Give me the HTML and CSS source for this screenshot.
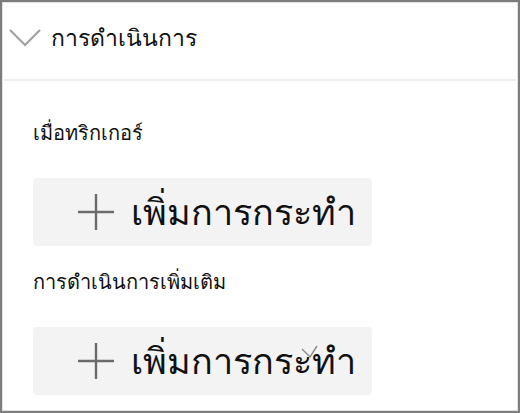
FILE: index.html
```html
<!DOCTYPE html>
<html lang="th">
<head>
    <meta charset="UTF-8">
    <meta name="viewport" content="width=device-width, initial-scale=1.0">
    <title>การดำเนินการ</title>
    <link rel="stylesheet" href="styles.css">
</head>
<body>
    <div class="panel">
        <header class="panel-header">
            <svg class="chevron" width="32" height="18" viewBox="0 0 32 18">
                <polyline points="1,1 16,16 31,1" fill="none" stroke="#a0a0a0" stroke-width="2.2"/>
            </svg>
            <span class="panel-title">การดำเนินการ</span>
        </header>

        <main class="panel-body">
            <div class="section-label">เมื่อทริกเกอร์</div>
            <button class="add-button">
                <svg class="plus" width="36" height="36" viewBox="0 0 36 36">
                    <path d="M18 0 V36 M0 18 H36" stroke="#6b6b6b" stroke-width="2.4"/>
                </svg>
                <span>เพิ่มการกระทำ</span>
            </button>

            <div class="section-label">การดำเนินการเพิ่มเติม</div>
            <button class="add-button">
                <svg class="plus" width="36" height="36" viewBox="0 0 36 36">
                    <path d="M18 0 V36 M0 18 H36" stroke="#6b6b6b" stroke-width="2.4"/>
                </svg>
                <span>เพิ่มการกระทำ</span>
                <!-- เคอร์เซอร์ที่ค้างอยู่บนปุ่ม -->
                <svg class="cursor-mark" width="18" height="14" viewBox="0 0 18 14">
                    <polyline points="1,4 9,12 16,1" fill="none" stroke="#8a8a8a" stroke-width="1.4"/>
                </svg>
            </button>
        </main>
    </div>
</body>
</html>
```

FILE: styles.css
```css
* {
    box-sizing: border-box;
    margin: 0;
    padding: 0;
}

body {
    font-family: 'Noto Sans', 'DejaVu Sans', sans-serif;
    background-color: #fff;
    color: #111;
}

.panel {
    width: 520px;
    height: 413px;
    border: 2px solid #7d7d7d;
    box-shadow: inset 0 0 0 1px #e2e2e2;
    background-color: #fff;
}

.panel-header {
    display: flex;
    align-items: center;
    gap: 10px;
    height: 79px;
    padding-left: 7px;
    padding-bottom: 6px;
    border-bottom: 2px solid #efefef;
}

.panel-title {
    font-size: 23px;
}

.panel-body {
    padding: 38px 0 0 31px;
}

.section-label {
    font-size: 20px;
    line-height: 28px;
}

.add-button {
    position: relative;
    display: flex;
    align-items: center;
    gap: 17px;
    width: 339px;
    height: 68px;
    margin: 31px 0 22px;
    padding-left: 45px;
    border: none;
    border-radius: 4px;
    background-color: #f3f3f3;
    font-family: inherit;
    font-size: 36px;
    color: #111;
    cursor: pointer;
}

.cursor-mark {
    position: absolute;
    left: 268px;
    top: 18px;
}
```
